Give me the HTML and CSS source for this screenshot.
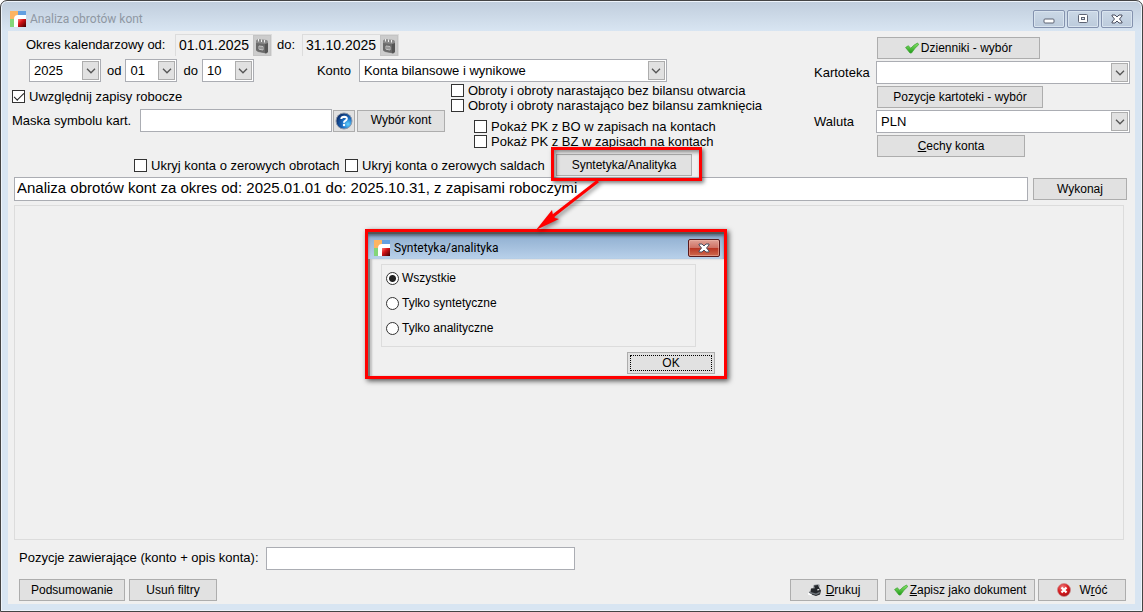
FILE: index.html
```html
<!DOCTYPE html>
<html lang="pl">
<head>
<meta charset="utf-8">
<title>Analiza obrotów kont</title>
<link rel="stylesheet" href="styles.css">
</head>
<body>
<svg class="defs" aria-hidden="true">
  <defs>
    <linearGradient id="red" x1="0" y1="0" x2="1" y2="1"><stop offset="0" stop-color="#ff7a70"/><stop offset=".4" stop-color="#d41216"/><stop offset="1" stop-color="#3a0002"/></linearGradient>
    <linearGradient id="green" x1="0" y1="0" x2="0" y2="1"><stop offset="0" stop-color="#8be86b"/><stop offset="1" stop-color="#1f9a18"/></linearGradient>
    <radialGradient id="blue" cx=".75" cy=".7" r=".8"><stop offset="0" stop-color="#5fd0ff"/><stop offset=".45" stop-color="#1c6fc4"/><stop offset="1" stop-color="#0b2a66"/></radialGradient>
    <radialGradient id="stop" cx=".4" cy=".3" r=".8"><stop offset="0" stop-color="#f08080"/><stop offset=".5" stop-color="#d81c20"/><stop offset="1" stop-color="#9c0a10"/></radialGradient>
    <symbol id="logo" viewBox="0 0 16 16">
      <path fill="#fdb462" d="M0 0h8v4L4 8H0z"/><path fill="#639fe0" d="M8 0h8v4H8z"/><path fill="#83d67a" d="M0 8h5v8H0z"/>
      <path fill="#fff" d="M4 16V8q0-4 4-4h8v4H8v8z"/><path fill="url(#red)" d="M8 8h8v8H8z"/>
    </symbol>
    <symbol id="tick" viewBox="0 0 14 12"><path fill="url(#green)" stroke="#3fa535" stroke-width=".8" d="M.6 5.500 3.200 3.800l2.600 2.400Q9 2.600 12.600 1l1 1.800Q9.500 6 6.500 11H5z"/></symbol>
    <symbol id="chevron" viewBox="0 0 10 6"><path fill="none" stroke="#555" stroke-width="1.300" d="m1 .8 4 4 4-4"/></symbol>
    <symbol id="calendar" viewBox="0 0 14 16">
      <path fill="#8a8a8a" d="M1 2.500 3 1l9 1 1 1.500V14l-2 1.500-8-1.500-2-1.500z"/><path fill="#6a6a6a" d="M1 5l9 1v9l-7-1.500L1 12z"/><path fill="#555" d="m10 6 3-1v9l-2 1.500-1-.5z"/>
      <path stroke="#eee" d="M3.500 1v2.500M6.500 1.500v2.500M9.500 2v2.500"/><path fill="none" stroke="#c4c4c4" d="M4 8l4 .5V12l-4-.8zM6 8.500v3"/>
    </symbol>
    <symbol id="x" viewBox="0 0 12 10"><path fill="#fff" stroke="#4b4f60" stroke-linejoin="round" d="M1 1h3l2 2 2-2h3v1L8.500 5 11 8v1H8L6 7 4 9H1V8l2.500-3L1 2z"/></symbol>
  </defs>
</svg>

<main class="window">
  <header class="titlebar">
    <svg class="logo"><use href="#logo"/></svg>
    <h1>Analiza obrotów kont</h1>
    <div class="window-buttons">
      <button type="button" aria-label="Minimalizuj"><svg viewBox="0 0 12 10"><rect x="1" y="5" width="10" height="4" rx="1" fill="#fff" stroke="#5d6373"/></svg></button>
      <button type="button" aria-label="Maksymalizuj"><svg viewBox="0 0 12 10"><rect x="1.500" y=".5" width="9" height="8" rx="1" fill="#fff" stroke="#5d6373"/><rect x="4.500" y="3.500" width="3" height="2" fill="#dde5ef" stroke="#5d6373"/></svg></button>
      <button type="button" aria-label="Zamknij"><svg><use href="#x"/></svg></button>
    </div>
  </header>

  <form class="client">
    <div class="filters">
      <div class="filters-main">
        <div class="row row-dates">
          <label for="from">Okres kalendarzowy od:</label>
          <div class="date"><input id="from" value="01.01.2025"><button type="button" aria-label="Kalendarz od"><svg><use href="#calendar"/></svg></button></div>
          <label for="to">do:</label>
          <div class="date"><input id="to" value="31.10.2025"><button type="button" aria-label="Kalendarz do"><svg><use href="#calendar"/></svg></button></div>
        </div>

        <div class="row row-period">
          <div class="combo year"><select aria-label="Rok"><option>2025</option></select><span><svg><use href="#chevron"/></svg></span></div>
          <label for="m1">od</label>
          <div class="combo month"><select id="m1"><option>01</option></select><span><svg><use href="#chevron"/></svg></span></div>
          <label for="m2">do</label>
          <div class="combo month"><select id="m2"><option>10</option></select><span><svg><use href="#chevron"/></svg></span></div>
          <label class="konto-label" for="konto">Konto</label>
          <div class="combo konto"><select id="konto"><option>Konta bilansowe i wynikowe</option></select><span><svg><use href="#chevron"/></svg></span></div>
        </div>

        <div class="row row-options">
          <div class="options-left">
            <label class="check"><input type="checkbox" checked>Uwzględnij zapisy robocze</label>
            <div class="mask">
              <label for="mask">Maska symbolu kart.</label>
              <input class="field" id="mask" type="text">
              <button type="button" class="btn help" aria-label="Pomoc"><svg viewBox="0 0 18 18"><circle cx="9" cy="9" r="8" fill="url(#blue)" stroke="#8c98aa"/><path fill="none" stroke="#fff" stroke-width="2" d="M6.300 7Q6.500 4.700 9.200 4.700q2.700.1 2.600 2.200-.2 1.300-1.600 1.900-1.200.5-1.200 1.900"/><circle cx="9" cy="13" r="1.200" fill="#fff"/></svg></button>
              <button type="button" class="btn">Wybór kont</button>
            </div>
          </div>
          <div class="options-right">
            <label class="check"><input type="checkbox">Obroty i obroty narastająco bez bilansu otwarcia</label>
            <label class="check"><input type="checkbox">Obroty i obroty narastająco bez bilansu zamknięcia</label>
            <div class="nested">
              <label class="check"><input type="checkbox">Pokaż PK z BO w zapisach na kontach</label>
              <label class="check"><input type="checkbox">Pokaż PK z BZ w zapisach na kontach</label>
            </div>
          </div>
        </div>

        <div class="row row-hide">
          <label class="check"><input type="checkbox">Ukryj konta o zerowych obrotach</label>
          <label class="check"><input type="checkbox">Ukryj konta o zerowych saldach</label>
          <div class="highlight"><button type="button" class="btn">Syntetyka/Analityka</button></div>
        </div>
      </div>

      <div class="filters-side">
        <button type="button" class="btn journals"><svg class="tick"><use href="#tick"/></svg>Dzienniki - wybór</button>
        <label for="kartoteka">Kartoteka</label>
        <div class="combo"><select id="kartoteka"><option></option></select><span><svg><use href="#chevron"/></svg></span></div>
        <button type="button" class="btn positions">Pozycje kartoteki - wybór</button>
        <label for="waluta">Waluta</label>
        <div class="combo"><select id="waluta"><option>PLN</option></select><span><svg><use href="#chevron"/></svg></span></div>
        <button type="button" class="btn traits"><span><u>C</u>echy konta</span></button>
      </div>
    </div>

    <div class="summary">
      <input class="field" type="text" aria-label="Opis analizy" value="Analiza obrotów kont za okres od: 2025.01.01 do: 2025.10.31, z zapisami roboczymi">
      <button type="button" class="btn">Wykonaj</button>
    </div>

    <div class="results"></div>

    <div class="search">
      <label for="search">Pozycje zawierające (konto + opis konta):</label>
      <input class="field" id="search" type="text">
    </div>

    <footer class="actions">
      <button type="button" class="btn sum">Podsumowanie</button>
      <button type="button" class="btn action">Usuń filtry</button>
      <button type="button" class="btn action print"><svg class="printer" viewBox="0 0 14 12"><path fill="#9da1a6" d="M5.500 1 10 0l2 1-1 4-6-1z"/><path fill="#24272b" d="M6 1.500 10 1l1 3-4 1zM3 4.500l8-1 2 3-1 4-4 1.500-6-2z"/><path fill="#6f757b" d="m1 7.500 7 2 4-2-.500 2L8 11 1 9z"/><path fill="#fff" d="m0 9 4 1-1 1.500-3-1zM9 5.500l2-.5.5 1-2 .5z"/></svg><span><u>D</u>rukuj</span></button>
      <button type="button" class="btn save"><svg class="tick"><use href="#tick"/></svg><span><u>Z</u>apisz jako dokument</span></button>
      <button type="button" class="btn action back"><svg class="stop" viewBox="0 0 14 14"><circle cx="7" cy="7" r="6.500" fill="url(#stop)" stroke="#c88" stroke-width=".7"/><path stroke="#fff" stroke-width="2.200" d="m4.500 4.500 5 5m0-5-5 5"/></svg><span>W<u>r</u>óć</span></button>
    </footer>
  </form>

  <svg class="arrow" viewBox="0 0 70 54" aria-hidden="true"><path fill="none" stroke="#f00" stroke-width="3" d="M63 2 18 37"/><path fill="#f00" d="M1 51 17 31l1 5 2 3 4 1z"/></svg>

  <section class="dialog" role="dialog" aria-labelledby="dialog-title">
    <header>
      <svg class="logo"><use href="#logo"/></svg>
      <h2 id="dialog-title">Syntetyka/analityka</h2>
      <button type="button" aria-label="Zamknij okno"><svg><use href="#x"/></svg></button>
    </header>
    <div class="dialog-body">
      <fieldset>
        <label><input type="radio" name="kind" checked>Wszystkie</label>
        <label><input type="radio" name="kind">Tylko syntetyczne</label>
        <label><input type="radio" name="kind">Tylko analityczne</label>
      </fieldset>
      <button type="button" class="btn ok">OK</button>
    </div>
  </section>
</main>
</body>
</html>
```

FILE: styles.css
```css
* { box-sizing: border-box; }

body {
  margin: 0;
  background: #fff;
  color: #000;
  font: 13px/15px "Liberation Sans", Arial, sans-serif;
}

button, input, select { font: inherit; color: inherit; margin: 0; }
svg { display: block; flex: none; }
.defs { position: absolute; width: 0; height: 0; }
label { white-space: nowrap; }

.window {
  position: relative;
  display: flex;
  flex-direction: column;
  min-height: 100vh;
  padding: 0 6px 6px;
  border: 1px solid #444;
  border-radius: 7px 7px 0 0;
  box-shadow: inset 0 0 0 1px #eef4fb;
  background: linear-gradient(#c0cddc, #d8e5f2 30px);
}

.titlebar {
  display: flex;
  align-items: center;
  height: 30px;
  padding: 6px 3px 0 3px;
}

.logo { width: 16px; height: 16px; }

h1, h2 {
  margin: 0 0 0 4px;
  font: 12px/16px Roboto, "Noto Sans", sans-serif;
}

h1 { color: #8f98a3; }

.window-buttons { display: flex; gap: 2px; margin-left: auto; }

.window-buttons button {
  display: flex;
  align-items: center;
  justify-content: center;
  width: 32px;
  height: 18px;
  padding: 0;
  border: 1px solid #8492ae;
  border-radius: 2px;
  background: linear-gradient(#cbd8e6, #bccbdc);
  box-shadow: inset 0 0 0 1px #d9e4ef;
}

.window-buttons svg { width: 12px; height: 10px; }

.client {
  flex: 1;
  display: flex;
  flex-direction: column;
  margin: 0 1px 1px;
  padding: 2px 5px 3px 4px;
  background: #f0f0f0;
}

.filters { display: flex; justify-content: space-between; gap: 16px; }
.row { display: flex; align-items: center; }

.btn {
  display: flex;
  align-items: center;
  justify-content: center;
  height: 22px;
  padding: 0 6px;
  border: 1px solid #adadad;
  background: #e1e1e1;
  font-size: 12px;
  white-space: nowrap;
}

.field {
  height: 23px;
  min-width: 0;
  padding: 0 3px;
  border: 1px solid #abadb3;
  background: #fff;
}

.row-dates { height: 23px; padding-left: 14px; }
.row-dates label { width: 149px; }
.row-dates .date + label { width: 25px; margin-left: 5px; }

.date {
  display: flex;
  width: 97px;
  height: 22px;
  border: solid #dcdcdc;
  border-width: 1px 1px 0;
}

.date input {
  flex: 1;
  min-width: 0;
  padding: 0 0 0 3px;
  border: 0;
  background: none;
  font-size: 14px;
}

.date button {
  width: 18px;
  padding: 2px 1px;
  border: 1px solid #c4c4c4;
  background: #ccc;
}

.date svg { width: 14px; height: 16px; }

.combo { position: relative; height: 23px; }

.combo select {
  width: 100%;
  height: 100%;
  padding: 0 20px 0 4px;
  border: 1px solid #abadb3;
  border-radius: 0;
  background: #fff;
  appearance: none;
}

.combo span {
  position: absolute;
  inset: 2px 2px 2px auto;
  display: flex;
  align-items: center;
  justify-content: center;
  width: 17px;
  border: 1px solid #adadad;
  background: #e1e1e1;
  pointer-events: none;
}

.combo span svg { width: 10px; height: 6px; }

.row-period { margin-top: 3px; padding-left: 17px; }
.row-period label { padding: 0 4px 0 6px; }
.year { width: 72px; }
.month { width: 52px; }
.row-period .konto-label { margin-left: 57px; padding-right: 8px; }
.konto { width: 308px; }

.check { display: flex; align-items: center; height: 15px; }

.check input, .dialog input {
  appearance: none;
  flex: none;
  width: 13px;
  height: 13px;
  margin-right: 4px;
  border: 1px solid #333;
  background: #fff;
}

.check input:checked { display: grid; place-items: center; }

.check input:checked::after {
  content: "";
  width: 9px;
  height: 4px;
  margin-bottom: 3px;
  border: solid #222;
  border-width: 0 0 1px 1px;
  transform: rotate(-45deg);
}

.row-options { align-items: stretch; gap: 6px; margin-top: 1px; }
.options-left { padding-top: 6px; }
.mask { display: flex; align-items: center; margin-top: 5px; }
.mask label { width: 128px; }
.mask .field { width: 192px; }
.mask .help { width: 22px; margin: 0 2px 0 1px; padding: 0; }
.help svg { width: 18px; height: 18px; }
.mask .btn:last-child { width: 88px; }
.nested { margin: 6px 0 0 23px; }

.row-hide { gap: 4px; margin-top: 5px; padding-left: 122px; }
.row-hide label { min-width: 207px; }

.highlight { position: relative; z-index: 2; }
.highlight .btn { width: 136px; }

.highlight::after {
  content: "";
  position: absolute;
  inset: -7px -10px -5px -5px;
  border: 3px solid #f00;
  box-shadow: 2px 2px 4px #0008, inset 2px 2px 4px #0007;
  pointer-events: none;
}

.filters-side {
  display: grid;
  grid-template-columns: 62px 1fr;
  align-content: start;
  align-items: center;
  gap: 2px 0;
  width: 316px;
  padding-top: 4px;
}

.filters-side .btn { grid-column: 2; margin-left: 1px; }
.journals { width: 163px; }
.positions { width: 166px; }
.traits { width: 148px; }
.tick { width: 14px; height: 12px; margin-right: 2px; }

.summary { display: flex; align-items: center; gap: 5px; margin-top: 1px; padding: 0 3px 0 2px; }
.summary .field { flex: 1; height: 24px; padding: 0 2px 3px; font-size: 15px; }
.summary .btn { width: 94px; }

.results {
  flex: 1;
  min-height: 300px;
  margin: 4px 6px 0 2px;
  border: 1px solid #dcdcdc;
}

.search { display: flex; align-items: center; gap: 5px; margin-top: 7px; padding-left: 7px; }
.search label { width: 242px; padding-bottom: 2px; }
.search .field { width: 309px; }

.actions { display: flex; gap: 4px; margin-top: 9px; padding: 0 4px 0 7px; }
.sum { width: 106px; }
.action { width: 88px; }
.print { margin-left: auto; gap: 4px; }
.save { width: 150px; margin-left: 3px; }
.save + .back { margin-left: -1px; gap: 9px; }
.printer { width: 14px; height: 12px; }
.stop { width: 14px; height: 14px; }

.arrow {
  position: absolute;
  top: 178px;
  left: 534px;
  z-index: 3;
  width: 70px;
  height: 54px;
  filter: drop-shadow(2px 2px 2px #0007);
  pointer-events: none;
}

.dialog {
  position: absolute;
  top: 228px;
  left: 364px;
  z-index: 2;
  width: 362px;
  border: 3px solid #f00;
  background: #f0f0f0;
  box-shadow: 2px 2px 5px #000a;
}

.dialog header {
  display: flex;
  align-items: center;
  height: 27px;
  padding: 3px 4px 0 6px;
  border-top: 2px solid #555;
  background: linear-gradient(#8eadcf, #b9d1ea);
  box-shadow: inset 0 2px 3px #0006;
}

.dialog header button {
  display: flex;
  align-items: center;
  justify-content: center;
  width: 32px;
  height: 18px;
  margin-left: auto;
  padding: 0;
  border: 1px solid #5a1a1c;
  border-radius: 2px;
  background: linear-gradient(#e0a297, #cf7265 48%, #b83422 50%, #cf6a4e);
  box-shadow: inset 0 0 0 1px #efb9ad88;
}

.dialog header button svg { width: 12px; height: 10px; }

.dialog-body {
  padding: 5px 9px 2px 10px;
  border-left: 2px solid #777;
  box-shadow: inset 2px 0 2px #0003;
}

fieldset {
  display: grid;
  gap: 10px;
  margin: 0 19px 5px 1px;
  padding: 6px 4px 10px;
  border: 1px solid #dcdcdc;
}

fieldset label { display: flex; align-items: center; font-size: 12px; }
.dialog input { border-radius: 50%; margin-right: 3px; }
.dialog input:checked { background: radial-gradient(circle, #222 3px, #fff 4px); }

.ok { width: 88px; margin-left: auto; outline: 1px dotted #000; outline-offset: -4px; }
```
